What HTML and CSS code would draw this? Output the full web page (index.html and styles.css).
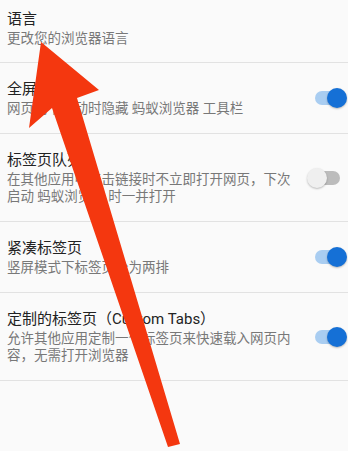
FILE: index.html
```html
<!DOCTYPE html>
<html lang="zh-CN">
<head>
<meta charset="utf-8">
<title>设置</title>
<link rel="stylesheet" href="styles.css">
</head>
<body>
<div class="list">
  <div class="row first">
    <div class="text">
      <div class="title">语言</div>
      <div class="sub">更改您的浏览器语言</div>
    </div>
  </div>
  <div class="row">
    <div class="text">
      <div class="title">全屏浏览</div>
      <div class="sub">网页向下滚动时隐藏 蚂蚁浏览器 工具栏</div>
    </div>
    <div class="switch on"><span class="track"></span><span class="thumb"></span></div>
  </div>
  <div class="row">
    <div class="text">
      <div class="title">标签页队列</div>
      <div class="sub">在其他应用中点击链接时不立即打开网页，下次启动 蚂蚁浏览器 时一并打开</div>
    </div>
    <div class="switch"><span class="track"></span><span class="thumb"></span></div>
  </div>
  <div class="row">
    <div class="text">
      <div class="title">紧凑标签页</div>
      <div class="sub">竖屏模式下标签页分为两排</div>
    </div>
    <div class="switch on"><span class="track"></span><span class="thumb"></span></div>
  </div>
  <div class="row">
    <div class="text">
      <div class="title">定制的标签页（Custom Tabs）</div>
      <div class="sub">允许其他应用定制一个标签页来快速载入网页内容，无需打开浏览器</div>
    </div>
    <div class="switch on"><span class="track"></span><span class="thumb"></span></div>
  </div>
</div>
<svg class="arrow" width="348" height="451" viewBox="0 0 348 451">
  <polygon points="41,42 99,90 77,98 180,444 168,447 52,108 29,128" fill="#f4370f"/>
</svg>
</body>
</html>
```
FILE: styles.css
```css
html, body {
  margin: 0;
  padding: 0;
}
body {
  background: #fafafa;
  font-family: Roboto, "Noto Sans CJK SC", sans-serif;
  width: 348px;
  height: 451px;
  overflow: hidden;
  position: relative;
}
.list {
  display: flex;
  flex-direction: column;
}
.row {
  display: flex;
  align-items: center;
  padding: 16px 0 16px 7px;
  border-bottom: 1px solid #e2e2e2;
}
.row.first {
  padding-top: 9px;
  padding-bottom: 15px;
}
.text {
  width: 290px;
  flex: none;
}
.title {
  font-size: 15px;
  line-height: 21px;
  color: #222222;
}
.sub {
  font-size: 13.5px;
  line-height: 17px;
  color: #787878;
}
.switch {
  position: relative;
  width: 40px;
  height: 22px;
  margin-left: 10px;
  flex: none;
}
.track {
  position: absolute;
  left: 8px;
  top: 4px;
  width: 25px;
  height: 14px;
  border-radius: 7px;
  background: #bcbcbc;
}
.thumb {
  position: absolute;
  left: 0;
  top: 1px;
  width: 20px;
  height: 20px;
  border-radius: 50%;
  background: #efefef;
  box-shadow: 0 1px 2px rgba(0, 0, 0, 0.25);
}
.switch.on .track {
  background: #a9cdf1;
}
.switch.on .thumb {
  left: 20px;
  background: #1570d6;
}
.arrow {
  position: absolute;
  left: 0;
  top: 0;
  pointer-events: none;
}
```
